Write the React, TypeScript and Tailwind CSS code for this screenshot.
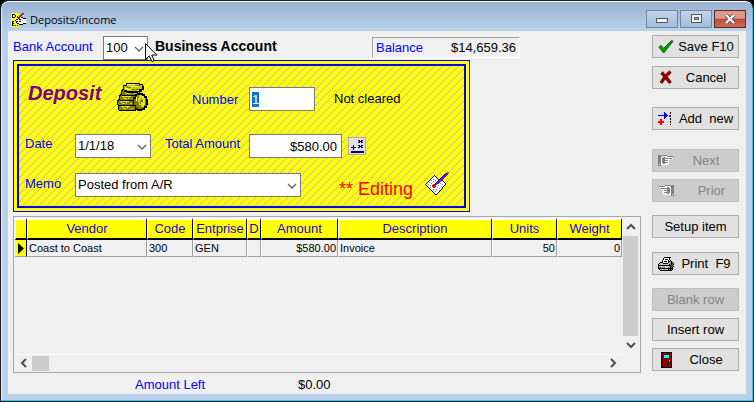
import { useEffect, useRef, useState } from "react";
import type { ReactNode } from "react";

interface Row {
  vendor: string;
  code: string;
  enterprise: string;
  d: string;
  amount: string;
  description: string;
  units: string;
  weight: string;
}

const rows: Row[] = [
  {
    vendor: "Coast to Coast",
    code: "300",
    enterprise: "GEN",
    d: "",
    amount: "$580.00",
    description: "Invoice",
    units: "50",
    weight: "0",
  },
];

const palette: Record<string, string> = {
  k: "#000000",
  w: "#ffffff",
  g: "#808080",
  s: "#c0c0c0",
  r: "#ff0000",
  m: "#800000",
  y: "#ffff00",
  b: "#0000ff",
  n: "#000080",
  c: "#00ffff",
  p: "#6a10c0",
};

// Small bitmaps, one character per pixel
function Bitmap({ map, className }: { map: string[]; className?: string }) {
  const width = Math.max(...map.map((l) => l.length));
  return (
    <svg width={width} height={map.length} shapeRendering="crispEdges" className={className} aria-hidden="true">
      {map.flatMap((line, y) =>
        [...line].map((ch, x) =>
          palette[ch] ? <rect key={`${x}-${y}`} x={x} y={y} width={1} height={1} fill={palette[ch]} /> : null
        )
      )}
    </svg>
  );
}

const PRINTER = [
  "......kkkkkkk...",
  ".....kwwwwwk....",
  ".....kwkkkwk....",
  "....kwwwwwk.k...",
  "....kwkkkwkkgk..",
  "..kkkwwwwwksgkk.",
  ".kssskkkkkssgkgk",
  "ksssssssssskgkgk",
  "kkkkkkkkkkkkkgk.",
  "kssssssssssgkkgk",
  "kggggggyyyggkgk.",
  "kkkkkkkkkkkkkkk.",
  ".ksssssssskgkgk.",
  "..kkkkkkkkkkkk..",
];

const ADD = [
  "......b.....k...",
  "......bb....k...",
  "......bbb.......",
  "bbbbbbbbbb.rk...",
  "......bbb..rk...",
  "......bb........",
  "......b.....k...",
  "..rr........k...",
  "..rr............",
  "rrrrrr......k...",
  "rrrrrr......k...",
  "..rr............",
  "..rr........k...",
];

const HAND = [
  "ggg.ggggg.......",
  "ggggwwwwwgggggg.",
  "gggwwggwwwwwwwwg",
  "gggwggggggggggw.",
  "gggwgggwwwwww...",
  "gggwggggggw.....",
  "gggwgggwwww.....",
  "gggwggggggw.....",
  "gggwwggwwww.....",
  "gwgwwwwwww......",
  "ggg.............",
];

const DOOR = [
  "kkkkkkkkkkk",
  "kmmmmmmmmmk",
  "kmmmmmmmmmk",
  "kmmcccccmmk",
  "kmmcccccmmk",
  "kmmcccccmmk",
  "kmmmmmmmmmk",
  "kmmmmmmmmmk",
  "kmmmmmmmymk",
  "kmmmmmmmmmk",
  "kmmmmmmmmmk",
  "kmmmmmmmmmk",
  "kmmmmmmmmmk",
  "kmmmmmmmmmk",
  "kmmmmmmmmmk",
  "kkkkkkkkkkk",
];

const CALC = [
  ".......nn.nn",
  "........nnn.",
  ".......nn.nn",
  "............",
  "............",
  "..n....nn.nn",
  "..n.....nnn.",
  "nnnnn..nn.nn",
  "..n.........",
  "..n.........",
  "............",
  "nnnnnnnnnnnnn",
  "nnnnnnnnnnnnn",
];

const APP = [
  "yyyyyyyy...mm",
  "ykkkyyyy..mr.",
  "ykyykyy..mr..",
  "ykyykymymr...",
  "ykkkyymmrwkk.",
  "yyyyyyymrwwwkkk",
  "yyyyykmwkkwwwww",
  "yyyykwwwwwwwwww",
  "ykkyykkwkkwwwww",
  "ykyyykwwwwwwwww",
  "ykkyyykkwwwwkkk",
  "ykyyyyyykkkk.",
  "ykkykyky.....",
  "yyyyyyyy.....",
];

const EDIT = [
  "......................gg",
  "....................pppg",
  "...................bppp.",
  ".........k........bppp..",
  "........kwk......bppp...",
  ".......kwwwk....bppp....",
  "......kwwwwwk..bppp.....",
  ".....kwwgwwwwkbppp......",
  "....kwgwwwgwwbpppk......",
  "...kwwwwgwwwbpppwwk.....",
  "..kwgwwwwwwbpppwwwwk....",
  ".kwwwwgwwwbpppwgwwwwk...",
  "kwwgwwwwrrppwwwwwgwwk...",
  ".kwwwgwrrrrwwgwwwwwk....",
  "..kwwwwrrrrwwwwwgwk.....",
  "...kwgwwrrwwgwwwwk......",
  "....kwwwwwwwwwgwwk......",
  ".....kwwgwwgwwwwk.......",
  "......kwwwwwwwgk........",
  ".......kwwgwwwk.........",
  "........kwwwwk..........",
  ".........kwwk...........",
  "..........kk............",
];

const coinStack = [
  { x: 1, y: 22 },
  { x: 0, y: 17 },
  { x: 2, y: 12 },
  { x: 4, y: 7 },
];

function CoinsIcon() {
  return (
    <svg width="31" height="30" viewBox="0 0 31 30" shapeRendering="crispEdges" aria-hidden="true">
      {coinStack.map(({ x, y }) => (
        <g key={y}>
          <rect x={x} y={y} width="19" height="7" rx="3" fill="#000" />
          <rect x={x + 1} y={y + 1} width="17" height="5" rx="2" fill="#808000" />
          <path d={`M${x + 3} ${y + 2}h9v1h-9zM${x + 5} ${y + 4}h3v1h-3z`} fill="#e8e800" />
          <path d={`M${x + 4} ${y + 3}h1v1h-1zM${x + 9} ${y + 3}h1v2h-1zM${x + 13} ${y + 4}h2v1h-2z`} fill="#c0c0c0" />
        </g>
      ))}
      <path d="M9 1h14v1h3v2h1v4h-2v2h-4v1H10v-1H7V8H6V3h3z" fill="#000" />
      <path d="M10 2h12v1h3v4h-3v2H10V8H7V4h3z" fill="#c8c800" />
      <path d="M10 2h8v1h-8zM13 4h8v1h-8zM8 6h3v1h3v1h-4V7H8z" fill="#ffff60" />
      <path d="M18 3h5v1h-5zM9 5h5v1H9zM15 7h7v1h-7z" fill="#808000" />
      <path d="M20 11h6v1h2v2h2v3h1v6h-1v3h-2v2h-3v1h-5v-2h-2v-3h-2v-9h2v-3h2z" fill="#000" />
      <path d="M20 13h5v1h2v2h2v8h-2v2h-2v1h-4v-1h-2v-3h-2v-6h2v-3h1z" fill="#808000" />
      <path d="M22 13h3v1h2v2h1v7h-1v2h-3v-2h-2v-3h-1v-4h1z" fill="#dede00" />
      <path d="M24 16h1v2h1v2h-2v2h-1v-4h1z" fill="#808000" />
      <path d="M25 14h1v2h-1zM26 21h1v2h-1zM19 15h1v4h-1z" fill="#ffff90" />
    </svg>
  );
}

function CheckIcon() {
  return (
    <svg width="17" height="15" viewBox="0 0 17 15" aria-hidden="true">
      <path d="M1 8l2.500-1.500 2.500 3L14.500 1l1.500 1L6 14.500z" fill="#00a000" stroke="#006000" />
    </svg>
  );
}

function CrossIcon() {
  return (
    <svg width="14" height="15" viewBox="0 0 14 15" aria-hidden="true">
      <path d="M2.500 2.500q4 4 9 10.500M11.500 1.500Q6 6 2 13" stroke="#8b0000" strokeWidth="3.400" fill="none" />
    </svg>
  );
}

function Chevron({ className = "", heavy = false }: { className?: string; heavy?: boolean }) {
  return (
    <svg width="10" height="10" viewBox="0 0 10 10" className={className} aria-hidden="true">
      <path d="M1 3l4 4 4-4" fill="none" stroke={heavy ? "#505050" : "#606060"} strokeWidth={heavy ? 2 : 1.3} />
    </svg>
  );
}

// Diagonal hatch that fills the form's background
function Hatch() {
  return (
    <svg className="absolute inset-0 h-full w-full" shapeRendering="crispEdges" aria-hidden="true">
      <defs>
        <pattern id="hatch" width="8" height="8" patternUnits="userSpaceOnUse">
          <path
            d="M7 0h1v1h-1zM6 1h1v1h-1zM5 2h1v1h-1zM4 3h1v1h-1zM3 4h1v1h-1zM2 5h1v1h-1zM1 6h1v1h-1zM0 7h1v1h-1z"
            fill="#b8b8b8"
          />
        </pattern>
      </defs>
      <rect width="100%" height="100%" fill="url(#hatch)" />
    </svg>
  );
}

interface SelectBoxProps {
  id: string;
  value: string;
  className: string;
}

function SelectBox({ id, value, className }: SelectBoxProps) {
  return (
    <div className={`relative h-6 shrink-0 ${className}`}>
      <select
        id={id}
        defaultValue={value}
        className="block h-full w-full appearance-none border border-[#7a7a7a] bg-white pr-4 pl-0.5 text-[13px] leading-4 text-black outline-none"
      >
        <option>{value}</option>
      </select>
      <Chevron className="pointer-events-none absolute top-2 right-1" />
    </div>
  );
}

interface SideButtonProps {
  icon?: ReactNode;
  disabled?: boolean;
  className?: string;
  children: ReactNode;
}

function SideButton({ icon, disabled = false, className = "", children }: SideButtonProps) {
  return (
    <button
      type="button"
      disabled={disabled}
      className={`flex h-[23px] w-full items-center border border-[#adadad] bg-[#e1e1e1] pl-[5px] text-[13px] whitespace-pre text-black disabled:border-[#bfbfbf] disabled:bg-[#cccccc] disabled:text-[#838383] ${className}`}
    >
      {icon && <span className="flex w-4 shrink-0 justify-center">{icon}</span>}
      <span className="flex-1 text-center">{children}</span>
    </button>
  );
}

function TitleBar() {
  const control = "flex h-[18px] w-8 items-center justify-center border";
  return (
    <header className="flex h-[29px] items-center bg-linear-to-b from-[#99b2d1] to-[#b9d1ea] pt-1.5 pl-[3px]">
      <Bitmap map={APP} />
      <h1 className="ml-1 flex-1 font-['Open_Sans',sans-serif] text-[11px] leading-4 text-black">Deposits/income</h1>
      <div className="flex gap-0.5 pb-0.5">
        <button type="button" aria-label="Minimize" className={`${control} border-[#6f87a5] bg-linear-to-b from-[#c3d5ea] to-[#a3bcd9]`}>
          <svg width="12" height="6" shapeRendering="crispEdges" className="mt-1">
            <rect x="0" y="0" width="12" height="5" fill="#53565d" />
            <rect x="1" y="1" width="10" height="3" fill="#f2f2f2" />
          </svg>
        </button>
        <button type="button" aria-label="Maximize" className={`${control} border-[#6f87a5] bg-linear-to-b from-[#c3d5ea] to-[#a3bcd9]`}>
          <svg width="11" height="9" shapeRendering="crispEdges">
            <rect x="0" y="0" width="11" height="9" fill="#53565d" />
            <rect x="1" y="1" width="9" height="7" fill="#f2f2f2" />
            <rect x="3" y="3" width="5" height="3" fill="#53565d" />
            <rect x="4" y="4" width="3" height="1" fill="#a3bcd9" />
          </svg>
        </button>
        <button type="button" aria-label="Close window" className={`${control} border-[#5a2a30] bg-linear-to-b from-[#dc9a8e] from-45% via-[#c24a37] via-50% to-[#cf6a50]`}>
          <svg width="12" height="10" viewBox="0 0 12 10">
            <path d="M2 1l8 8M10 1L2 9" stroke="#53565d" strokeWidth="4" />
            <path d="M2 1l8 8M10 1L2 9" stroke="#fff" strokeWidth="2.200" />
          </svg>
        </button>
      </div>
    </header>
  );
}

function DepositForm() {
  const [number, setNumber] = useState("1");
  const [total, setTotal] = useState("$580.00");
  const numberRef = useRef<HTMLInputElement>(null);

  useEffect(() => {
    numberRef.current?.focus();
    numberRef.current?.select();
  }, []);

  return (
    <section className="mr-[171px] border border-[#0000ff] bg-[#ffff00] p-[3px]">
      <div className="relative border-2 border-[#0000ff]">
        <Hatch />
        <div className="relative flex flex-col pt-[15px] pb-1.5 pl-1.5 text-[13px]">
          <div className="flex h-8 items-center">
            <h2 className="w-[92px] pb-2 pl-[3px] text-[20px] leading-6 font-bold text-[#800080] italic">Deposit</h2>
            <CoinsIcon />
            <label htmlFor="number" className="ml-11 w-[57px] pt-1.5 text-[#0000ff]">
              Number
            </label>
            <input
              id="number"
              ref={numberRef}
              value={number}
              onChange={(e) => setNumber(e.target.value)}
              className="mt-1 h-6 w-[66px] border border-[#7a7a7a] bg-white px-0.5 outline-none selection:bg-[#0078d7] selection:text-white"
            />
            <span className="ml-[19px] pt-1 text-black">Not cleared</span>
          </div>

          <div className="mt-[21px] flex h-6 items-center">
            <label htmlFor="date" className="w-[50px] pb-1 text-[#0000ff]">
              Date
            </label>
            <SelectBox id="date" value="1/1/18" className="w-[76px]" />
            <label htmlFor="total" className="ml-3.5 w-[84px] pb-1 text-[#0000ff]">
              Total Amount
            </label>
            <input
              id="total"
              value={total}
              onChange={(e) => setTotal(e.target.value)}
              className="h-6 w-[93px] border border-[#7a7a7a] bg-white px-1 text-right outline-none"
            />
            <button type="button" aria-label="Calculator" className="ml-1.5 flex size-[18px] items-center justify-center border border-[#adadad] bg-[#e1e1e1]">
              <Bitmap map={CALC} className="shrink-0" />
            </button>
          </div>

          <div className="mt-3 flex h-[30px] items-center">
            <label htmlFor="memo" className="w-[50px] pb-0.5 text-[#0000ff]">
              Memo
            </label>
            <SelectBox id="memo" value="Posted from A/R" className="w-[226px]" />
            <span className="ml-[38px] w-[86px] pt-2 text-[18px] leading-5 text-[#ff0000]">** Editing</span>
            <Bitmap map={EDIT} className="-mt-1" />
          </div>
        </div>
      </div>
    </section>
  );
}

function ItemsGrid() {
  const th =
    "h-[22px] border-t-2 border-r border-b-2 border-l border-t-white border-r-black border-b-black border-l-white bg-[#ffff00] p-0 text-center text-[13px] font-normal leading-4 text-[#2a00d5]";
  const td = "h-[17px] border-r border-b border-l border-r-[#a0a0a0] border-b-[#a0a0a0] border-l-white px-px py-0 text-[11px] leading-4";

  return (
    <section className="mt-1 flex h-[157px] flex-col border border-[#a7a7ad] bg-[#f0f0f0] p-px">
      <div className="flex flex-1">
        <div className="flex-1">
          <table className="w-full table-fixed border-separate border-spacing-0">
            <colgroup>
              <col className="w-3" />
              <col className="w-[120px]" />
              <col className="w-[46px]" />
              <col className="w-[54px]" />
              <col className="w-3.5" />
              <col className="w-[77px]" />
              <col />
              <col className="w-[65px]" />
              <col className="w-[65px]" />
            </colgroup>
            <thead>
              <tr>
                <th className={th} aria-label="Current row" />
                <th className={th}>Vendor</th>
                <th className={th}>Code</th>
                <th className={th}>Entprise</th>
                <th className={th}>D</th>
                <th className={th}>Amount</th>
                <th className={th}>Description</th>
                <th className={th}>Units</th>
                <th className={th}>Weight</th>
              </tr>
            </thead>
            <tbody>
              {rows.map((row) => (
                <tr key={row.vendor}>
                  <td className="border-r border-b border-r-black border-b-[#a0a0a0] bg-[#ffff00] p-0">
                    <svg width="8" height="11" viewBox="0 0 8 11" className="ml-0.5" aria-hidden="true">
                      <path d="M1 0l6 5.500-6 5.500z" fill="#000" />
                    </svg>
                  </td>
                  <td className={td}>{row.vendor}</td>
                  <td className={td}>{row.code}</td>
                  <td className={td}>{row.enterprise}</td>
                  <td className={td}>{row.d}</td>
                  <td className={`${td} text-right`}>{row.amount}</td>
                  <td className={td}>{row.description}</td>
                  <td className={`${td} text-right`}>{row.units}</td>
                  <td className={`${td} text-right`}>{row.weight}</td>
                </tr>
              ))}
            </tbody>
          </table>
        </div>
        <div className="flex w-[17px] flex-col items-center">
          <Chevron heavy className="my-1 rotate-180" />
          <div className="w-[15px] flex-1 bg-[#cdcdcd]" />
          <Chevron heavy className="my-1" />
        </div>
      </div>
      <div className="mr-[17px] flex h-[17px] items-center border-t border-white pl-1">
        <Chevron heavy className="rotate-90" />
        <div className="ml-[3px] h-[15px] w-[17px] bg-[#cdcdcd]" />
        <Chevron heavy className="mr-1 ml-auto -rotate-90" />
      </div>
    </section>
  );
}

export default function App() {
  return (
    <div className="bg-black font-['Liberation_Sans',Arial,sans-serif]">
      <div className="flex min-h-screen flex-col overflow-hidden rounded-t-lg border border-[#1a1a24]">
        <div className="flex flex-1 flex-col rounded-t-[7px] border border-t-white border-r-[#28c8e8] border-b-[#28c8e8] border-l-[#e8f2fb] bg-linear-to-b from-[#99b2d1] to-[#b9d1ea] to-8% px-1.5 pb-1.5">
          <TitleBar />
          <main className="flex flex-1 gap-[11px] bg-[#f0f0f0] pt-1 pr-[7px] pl-[5px]">
            <div className="min-w-0 flex-1">
              <div className="flex h-[25px] items-center">
                <label htmlFor="bank" className="w-[90px] pb-0.5 text-[13px] text-[#0000ff]">
                  Bank Account
                </label>
                <div className="relative">
                  <SelectBox id="bank" value="100" className="w-[45px]" />
                  <svg width="12" height="19" viewBox="0 0 12 19" className="pointer-events-none absolute top-[7px] left-[42px]" aria-hidden="true">
                    <path d="M.5.500v16l3.800-3.600 2.500 5.600 2.400-1-2.500-5.500h5z" fill="#fff" stroke="#000" />
                  </svg>
                </div>
                <strong className="ml-[7px] pb-0.5 text-[14px] text-black">Business Account</strong>
                <div className="ml-auto mr-[121px] flex h-[21px] w-[148px] items-center justify-between border border-t-[#a0a0a0] border-r-white border-b-white border-l-[#a0a0a0] px-[3px] text-[13px]">
                  <span className="text-[#0000ff]">Balance</span>
                  <span className="text-black">$14,659.36</span>
                </div>
              </div>
              <DepositForm />
              <ItemsGrid />
              <div className="flex h-[21px] items-center pt-0.5 pl-[122px] text-[13px]">
                <span className="w-[163px] text-[#0000ff]">Amount Left</span>
                <span className="text-black">$0.00</span>
              </div>
            </div>

            <aside className="flex w-[87px] shrink-0 flex-col">
              <SideButton icon={<CheckIcon />}>Save F10</SideButton>
              <SideButton icon={<CrossIcon />} className="mt-2">Cancel</SideButton>
              <SideButton icon={<Bitmap map={ADD} />} className="mt-[18px]">Add  new</SideButton>
              <SideButton icon={<Bitmap map={HAND} />} disabled className="mt-[19px]">Next</SideButton>
              <SideButton icon={<Bitmap map={HAND} className="-scale-x-100" />} disabled className="mt-[7px]">   Prior</SideButton>
              <SideButton className="mt-[13px] pr-[5px]">Setup item</SideButton>
              <SideButton icon={<Bitmap map={PRINTER} />} className="mt-3.5">Print  F9</SideButton>
              <SideButton disabled className="mt-[13px] pr-[5px]">Blank row</SideButton>
              <SideButton className="mt-[7px] pr-[5px]">Insert row</SideButton>
              <SideButton icon={<Bitmap map={DOOR} />} className="mt-[7px]">Close</SideButton>
            </aside>
          </main>
        </div>
      </div>
    </div>
  );
}
